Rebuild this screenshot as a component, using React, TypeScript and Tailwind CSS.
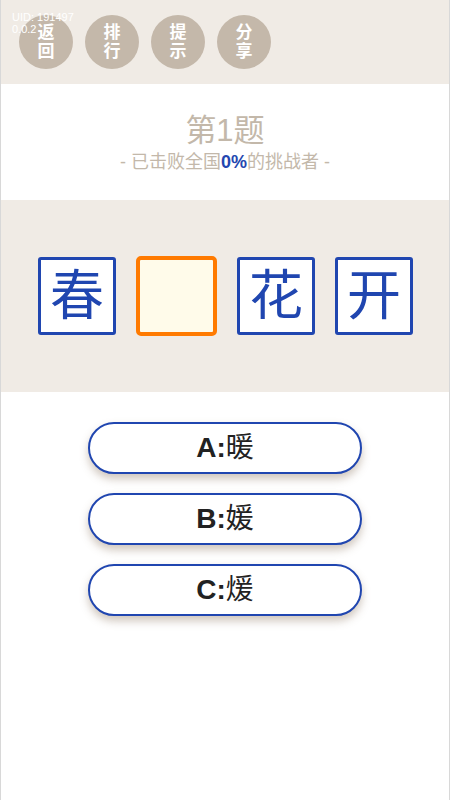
const font = "font-['Liberation_Sans','Noto_Sans_CJK_SC',sans-serif]";

const toolButtons = [
  ["返", "回"],
  ["排", "行"],
  ["提", "示"],
  ["分", "享"],
];

const tiles: (string | null)[] = ["春", null, "花", "开"];

const options = [
  { key: "A", word: "暖" },
  { key: "B", word: "媛" },
  { key: "C", word: "煖" },
];

export default function App() {
  return (
    <div className={`${font} w-[450px] h-[800px] flex flex-col bg-white border-x border-[#d8d8d8] overflow-hidden`}>
      {/* Header */}
      <div className="relative h-[84px] shrink-0 bg-[#f0ebe5] flex items-center gap-[12px] pl-[18px]">
        {toolButtons.map(([a, b]) => (
          <button
            key={a}
            className="w-[54px] h-[54px] rounded-full bg-[#c4b8aa] text-white text-[17px] leading-[19px] font-bold flex flex-col items-center justify-center"
          >
            <span>{a}</span>
            <span>{b}</span>
          </button>
        ))}
        <div className="absolute left-[11px] top-[11px] text-white text-[11px] leading-[12px]">
          <div>UID: 191497</div>
          <div>0.0.2</div>
        </div>
      </div>

      {/* Title */}
      <div className="h-[116px] shrink-0 flex flex-col items-center pt-[29px]">
        <div className="text-[31px] leading-[36px] text-[#c3b8aa]">第1题</div>
        <div className="text-[18px] leading-[22px] text-[#c3b8aa] mt-[2px]">
          - 已击败全国<span className="font-bold text-[#2447b0]">0%</span>的挑战者 -
        </div>
      </div>

      {/* Tiles */}
      <div className="h-[192px] shrink-0 bg-[#f0ebe5] flex items-center justify-center gap-[20px] pl-[1px]">
        {tiles.map((t, i) =>
          t ? (
            <div
              key={i}
              className="w-[78px] h-[78px] bg-white border-[3px] border-[#2046b0] rounded-[3px] flex items-center justify-center text-[54px] text-[#2046b0]"
            >
              {t}
            </div>
          ) : (
            <div
              key={i}
              className="w-[81px] h-[80px] bg-[#fffbea] border-[4px] border-[#ff7a00] rounded-[5px]"
            />
          )
        )}
      </div>

      {/* Options */}
      <div className="flex flex-col items-center gap-[19px] pt-[30px]">
        {options.map((o) => (
          <button
            key={o.key}
            className="w-[274px] h-[52px] rounded-full bg-white border-[2px] border-[#2046b0] shadow-[0_5px_8px_rgba(150,130,110,0.45)] flex items-center justify-center text-[28px] text-[#222]"
          >
            <span className="font-bold">{o.key}:</span>
            <span>{o.word}</span>
          </button>
        ))}
      </div>
    </div>
  );
}
